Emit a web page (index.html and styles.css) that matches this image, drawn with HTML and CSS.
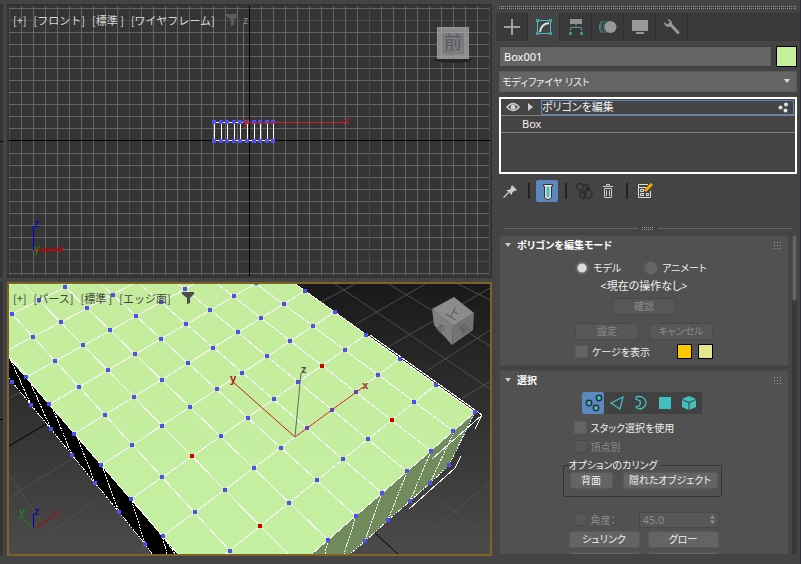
FILE: index.html
```html
<!DOCTYPE html>
<html lang="ja">
  <head>
    <title>Box001</title>
    <meta charset="utf-8">
    <link rel="stylesheet" href="styles.css">
  </head>
  <body>

  <main class="viewports">
    <div class="sliver"></div>
    <section class="viewport">
      <svg class="scene" viewBox="9 6 481 270" preserveAspectRatio="xMidYMid slice">
        <g id="frontGrid" shape-rendering="crispEdges"></g>
        <rect x="243" y="24" width="1" height="98" fill="#6b6b6b"/>
        <g id="frontBox" shape-rendering="crispEdges"></g>
        <rect x="243" y="122" width="102" height="1" fill="#d01e1e"/>
        <g class="axis">
          <text x="243" y="24" fill="#8c8c8c">z</text>
          <text x="243" y="125" fill="#c02020">y</text>
          <text x="343" y="124" fill="#c02020">x</text>
        </g>
        <rect x="33" y="226" width="1" height="24" fill="#0000c8"/>
        <rect x="34" y="249" width="28" height="2" fill="#c80000"/>
        <g class="axis">
          <text x="34" y="227" fill="#0000c8">z</text>
          <text x="34" y="252" fill="#149014">y</text>
          <text x="59" y="252" fill="#a01010">x</text>
        </g>
        <ellipse cx="453" cy="60" rx="19" ry="3" fill="#262626"/>
        <rect x="437.500" y="27.500" width="31" height="31" fill="#8a8a8a" stroke="#959595"/>
        <rect x="442" y="32" width="22" height="22" fill="#7c7c7c"/>
        <path d="M441.500 28V58M465.500 28V58M438 32.500H468M438 56.500H468" stroke="#999"/>
        <text class="cube-face" x="444" y="49" font-size="18">前</text>
      </svg>
      <div class="vp-label">
        <span>[+]</span><span>[フロント]</span><span>[標準 ]</span><span>[ワイヤフレーム]</span>
        <svg class="funnel" width="12" height="12" viewBox="0 0 12 12"><path d="M0 0H12V2L8 6V11L5 12V6L0 2Z"/></svg>
      </div>
    </section>

    <div class="sliver"></div>
    <section class="viewport active">
      <svg class="scene" viewBox="9 284 481 270" preserveAspectRatio="xMidYMid slice">
        <defs>
          <linearGradient id="sky" x1="0" y1="0" x2="0" y2="1">
            <stop offset="0" stop-color="#191919"/>
            <stop offset="1" stop-color="#4b4b4b"/>
          </linearGradient>
          <linearGradient id="top" x1="0" y1="0" x2="0" y2="1">
            <stop offset="0" stop-color="#c2ec9a"/>
            <stop offset="1" stop-color="#c6f0a2"/>
          </linearGradient>
        </defs>
        <rect x="9" y="284" width="481" height="270" fill="url(#sky)"/>
        <path d="M335 284L490 389M389 284L490 346M458 284L490 300M321 302L355 284M356 324L425 284M388 347L490 288M425 372L490 330M462 398L490 382" stroke="#4d4d4d" fill="none"/>
        <path d="M420 541L490 482M440 500L490 539M9 398L25 390M9 498L73 458M43 538L100 497M9 475L53 538" stroke="#505050" fill="none"/>
        <path d="M375 533L398 554M9 446L48 423" stroke="#000"/>
        <path d="M9 356L27 375L50 402L75 431L101 463L131 498L162 535L178 554H152L145 544L119 512L95 483L72 455L51 429L31 405L9 379Z" fill="#000"/>
        <path d="M475 412L313 554H350L365 541L388 520L410 501L430 483L449 465Z" fill="#708c5c"/>
        <g shape-rendering="crispEdges">
          <g id="mesh"></g>
          <g class="hidden-edges">
            <path d="M9 378L31 405L51 429L72 455L95 483L119 512L145 544L152 554"/>
            <path d="M9 356L31 405M9 356L27 375L51 429M50 402L72 455M75 431L95 483M101 463L119 512M131 498L145 544M131 498L167 542L175 554M162 535L167 554"/>
            <path d="M475 412L449 465L430 483L410 501L388 520L365 541L350 554"/>
            <path d="M454 432L430 483M431 451L410 501M407 472L388 520M382 493L365 541M356 516L344 554M328 540L325 554"/>
          </g>
          <path d="M370 335L482 415L475 429M482 415L432 459M461 456L455 468L409 509" stroke="#fff" fill="none"/>
        </g>
        <g id="meshPoints" shape-rendering="crispEdges"></g>
        <path d="M233 382L295 437L363 387" stroke="#c81e1e" fill="none"/>
        <path d="M295 437L301 373" stroke="#666"/>
        <g class="axis shaded">
          <text x="230" y="382" fill="#b02020">y</text>
          <text x="301" y="373" fill="#555">z</text>
          <text x="362" y="389" fill="#a04030">x</text>
        </g>
        <path d="M33.500 529V514" stroke="#0000b4"/>
        <path d="M34 529L22 517" stroke="#149014"/>
        <path d="M34 529L54 516" stroke="#c80000"/>
        <g class="axis">
          <text x="19" y="515" fill="#149014">y</text>
          <text x="34" y="515" fill="#0000b4">z</text>
          <text x="53" y="517" fill="#a01010">x</text>
        </g>
        <path d="M454 297L474 313L453 326L432 309Z" fill="#8c8c8c"/>
        <path d="M432 309L453 326L452 345L434 325Z" fill="#808080"/>
        <path d="M474 313L453 326L452 345L473 330Z" fill="#747474"/>
        <text class="cube-face" x="447" y="318" font-size="13" transform="rotate(30 454 312)">上</text>
        <text class="cube-face" x="437" y="332" font-size="9" transform="rotate(42 441 328)">左</text>
        <text class="cube-face" x="459" y="333" font-size="10" transform="rotate(-35 463 329)">前</text>
      </svg>
      <div class="vp-label">
        <span>[+]</span><span>[パース]</span><span>[標準 ]</span><span>[エッジ面]</span>
        <svg class="funnel" width="12" height="12" viewBox="0 0 12 12"><path d="M0 0H12V2L8 6V11L5 12V6L0 2Z"/></svg>
      </div>
    </section>
  </main>

  <aside class="panel">
    <div class="grip"></div>

    <nav class="tabs">
      <button class="tab" title="作成"><svg width="18" height="18" viewBox="0 0 18 18"><path d="M9 1V17M1 9H17" stroke="#a0a0a0" stroke-width="2"/></svg></button>
      <button class="tab on" title="修正"><svg width="18" height="18" viewBox="0 0 18 18" fill="none" stroke="#43bfc0"><path d="M4 2.500H14M4 15.500H14M2.500 4V14M15.500 4V14"/><path d="M1.500 1.500h2v2h-2zM14.500 1.500h2v2h-2zM1.500 14.500h2v2h-2zM14.500 14.500h2v2h-2z"/><path d="M5 14Q6 6 14 5" stroke="#ddd" stroke-width="2"/></svg></button>
      <button class="tab" title="階層"><svg width="18" height="18" viewBox="0 0 18 18"><path d="M3 1H15V6H3Z" fill="#929292"/><path d="M9 6V10M3.500 13V9.500H14.500V13" stroke="#459092" fill="none"/><path d="M2 14h3v3H2zM13 14h3v3h-3z" fill="#459092"/></svg></button>
      <button class="tab" title="モーション"><svg width="18" height="18" viewBox="0 0 18 18"><path d="M5 3A7 7 0 0 0 5 15M3 3A8 8 0 0 0 3 15M8 3A7 7 0 0 0 8 15" stroke="#459092" fill="none"/><circle cx="11.500" cy="9" r="6" fill="#989898"/></svg></button>
      <button class="tab" title="表示"><svg width="18" height="18" viewBox="0 0 18 18"><path d="M1 2H17V13H1ZM5 14H13V16H5Z" fill="#989898"/></svg></button>
      <button class="tab" title="ユーティリティ"><svg width="18" height="18" viewBox="0 0 18 18"><path d="M8 7L15 14.500" stroke="#989898" stroke-width="3" stroke-linecap="round"/><path d="M4 1L7 4L4.500 6.500L1 4Q1 8 5 9Q9 9 9 5Q8 1 4 1Z" fill="#989898"/></svg></button>
    </nav>

    <div class="name-row">
      <input class="name" type="text" value="Box001" aria-label="名前">
      <button class="swatch object-color" title="カラー"></button>
    </div>

    <div class="combo">
      <select aria-label="モディファイヤ リスト"><option>モディファイヤ リスト</option></select>
    </div>

    <ul class="stack">
      <li class="current">
        <svg width="14" height="10" viewBox="0 0 14 10"><path d="M1 5Q7-2 13 5Q7 12 1 5Z" fill="none" stroke="#d0d0d0" stroke-width="1.500"/><circle cx="7" cy="5" r="2.500" fill="#d0d0d0"/></svg>
        <svg width="7" height="8" viewBox="0 0 7 8"><path d="M1 0L6 4L1 8Z" fill="#d0d0d0"/></svg>
        <span class="modifier">ポリゴンを編集
          <svg width="11" height="11" viewBox="0 0 11 11" fill="#e0e0e0"><circle cx="2.500" cy="5.500" r="2"/><circle cx="8" cy="2.500" r="2"/><circle cx="7.500" cy="8.500" r="2"/></svg>
        </span>
      </li>
      <li class="base">Box</li>
    </ul>

    <div class="tools">
      <button class="tool" title="スタックを固定"><svg width="16" height="16" viewBox="0 0 16 16" fill="#ccc"><path d="M10 2L15 7L13 8L12 8L10 10L10 12L4 7L7 7L9 5L9 4ZM6 9L7 10L2 15L1 14.500Z"/></svg></button>
      <i class="sep"></i>
      <button class="tool on" title="最終結果を表示"><svg width="22" height="22" viewBox="0 0 22 22"><path d="M7.500 4.500H16.500V6.500H15.500V17Q15 19.500 12 19.500Q9 19.500 8.500 17V6.500H7.500Z" fill="#ddd" stroke="#333"/><path d="M10.500 7H13.500V17H10.500Z" fill="#43bfc0"/></svg></button>
      <i class="sep"></i>
      <button class="tool" title="固有にする"><svg width="18" height="18" viewBox="0 0 18 18" fill="none" stroke="#2b2b2b" stroke-width="1.300"><circle cx="5" cy="5" r="3.500"/><circle cx="8" cy="13" r="3"/><circle cx="13" cy="12" r="4"/><path d="M9 3H13V7M10 5L13 8L15 5"/></svg></button>
      <button class="tool" title="モディファイヤを削除"><svg width="16" height="16" viewBox="0 0 16 16" fill="none" stroke="#ccc"><path d="M3 3.500H13M6.500 3V1.500H9.500V3M4.500 5.500H11.500V14.500H4.500ZM6.500 7V13M9.500 7V13"/></svg></button>
      <i class="sep"></i>
      <button class="tool" title="モディファイヤ セットを設定"><svg width="16" height="16" viewBox="0 0 16 16" fill="none" stroke="#ddd"><path d="M11 1.500H1.500V14.500H13.500V8M2 4.500H9M3.500 6.500h3v2h-3zM3.500 10.500h3v2h-3zM9.500 10.500h2v2h-2z"/><path d="M8 8L15 1" stroke="#f5a700" stroke-width="3"/></svg></button>
    </div>

    <div class="splitter"><i class="dots"></i></div>

    <div class="rollouts">
      <div class="rollout-list">
        <section class="rollout">
          <h2>ポリゴンを編集モード<svg width="8" height="8"><use href="#gripDots"/></svg></h2>
          <div class="mode-body">
            <div class="radios">
              <label><input type="radio" name="mode" checked>モデル</label>
              <label><input type="radio" name="mode">アニメート</label>
            </div>
            <p>&lt;現在の操作なし&gt;</p>
            <button class="btn commit" disabled>確認</button>
            <div class="pair">
              <button class="btn" disabled>設定</button>
              <button class="btn" disabled>キャンセル</button>
            </div>
            <div class="cage">
              <label class="check"><input type="checkbox">ケージを表示</label>
              <button class="swatch cage-color" title="ケージ"></button>
              <button class="swatch cage-selected" title="選択ケージ"></button>
            </div>
          </div>
        </section>

        <section class="rollout selection">
          <h2>選択<svg width="8" height="8"><use href="#gripDots"/></svg></h2>
          <div class="select-body">
            <div class="levels">
              <button class="level on" title="頂点"><svg width="22" height="22" viewBox="0 0 22 22" fill="#43bfc0" stroke="#20363c" stroke-width="1.500"><circle cx="7" cy="11" r="2.700"/><circle cx="17" cy="6" r="2.700"/><circle cx="14" cy="16" r="2.700"/></svg></button>
              <button class="level" title="エッジ"><svg width="22" height="22" viewBox="0 0 22 22" fill="none" stroke="#43bfc0" stroke-width="1.300"><path d="M17 5L5 11L14 17Z"/></svg></button>
              <button class="level" title="境界"><svg width="22" height="22" viewBox="0 0 22 22" fill="none" stroke="#43bfc0" stroke-width="1.300"><path d="M6 5Q8 4 12 5Q16 7 16 11Q15 16 10 17Q7 17 6 15L9 14Q11 12 10 9L6 7Z"/></svg></button>
              <button class="level" title="ポリゴン"><svg width="22" height="22" viewBox="0 0 22 22"><path d="M5 5H17V17H5Z" fill="#43bfc0"/></svg></button>
              <button class="level" title="要素"><svg width="22" height="22" viewBox="0 0 22 22" fill="#43bfc0"><path d="M11 4L18 7L11 10L4 7ZM4 8L10.500 11V18L4 15ZM18 8L11.500 11V18L18 15Z"/></svg></button>
            </div>
            <label class="check"><input type="checkbox">スタック選択を使用</label>
            <label class="check off"><input type="checkbox" disabled>頂点別</label>
            <fieldset>
              <legend>オプションのカリング</legend>
              <button class="btn back">背面</button>
              <button class="btn occluded">隠れたオブジェクト</button>
            </fieldset>
            <div class="angle">
              <label class="check off"><input type="checkbox" disabled>角度：</label>
              <span class="spinner">
                <input type="text" value="45.0" disabled aria-label="角度">
                <svg width="5" height="9" viewBox="0 0 5 9" fill="#8c8c8c"><path d="M0 3.500L2.500 0L5 3.500ZM0 5.500L2.500 9L5 5.500Z"/></svg>
              </span>
            </div>
            <div class="pair wide">
              <button class="btn">シュリンク</button>
              <button class="btn">グロー</button>
            </div>
            <div class="pair wide">
              <button class="btn" title="リング"></button>
              <button class="btn" title="ループ"></button>
            </div>
          </div>
        </section>
      </div>
      <div class="scrollbar"><div class="thumb"></div></div>
    </div>
  </aside>

  <svg width="0" height="0" class="defs">
    <defs>
      <g id="gripDots" fill="#999"><path d="M0 1h1v1H0zM3 1h1v1H3zM6 1h1v1H6zM0 4h1v1H0zM3 4h1v1H3zM6 4h1v1H6zM0 7h1v1H0zM3 7h1v1H3zM6 7h1v1H6z"/></g>
    </defs>
  </svg>

  <script src="scene.js"></script>
  </body>
</html>
```

FILE: styles.css
```css
* {
  box-sizing: border-box;
}
html {
  height: 100%;
}
body {
  margin: 0;
  height: 100%;
  display: flex;
  overflow: hidden;
  background: #444;
  color: #f0f0f0;
  font-family: "Noto Sans", "Noto Sans CJK JP", sans-serif;
  font-size: 11px;
  line-height: 16px;
  font-feature-settings: "palt";
}
button, input, select {
  margin: 0;
  padding: 0;
  border: 0;
  color: inherit;
  font: inherit;
  font-feature-settings: inherit;
}
svg {
  display: block;
  flex: none;
}
.defs {
  position: absolute;
}

/* viewports */
.viewports {
  flex: 1;
  min-width: 0;
  display: grid;
  grid-template-columns: 3px 1fr;
  grid-template-rows: 1fr 1fr;
  gap: 4px;
  padding: 4px 4px 8px 0;
}
.sliver {
  background: linear-gradient(#000, #000) center / 100% 1px no-repeat #353535;
}
.viewport {
  position: relative;
  min-width: 0;
  min-height: 0;
  overflow: hidden;
  border: 2px solid #323232;
  background: #353535;
}
.viewport.active {
  border-color: #7b6426;
}
.scene {
  position: absolute;
  width: 100%;
  height: 100%;
}
.axis {
  font-size: 11px;
}
.axis.shaded {
  font-weight: bold;
}
.cube-face {
  fill: #565a62;
  font-family: "Noto Sans CJK JP", sans-serif;
}
.hidden-edges {
  fill: none;
  stroke: #fff;
  stroke-dasharray: 2 1;
}
.vp-label {
  position: absolute;
  top: 6px;
  left: 4px;
  display: flex;
  gap: 7px;
  color: #d8d8d8;
  font-family: "Noto Sans CJK JP", sans-serif;
  font-feature-settings: normal;
  white-space: pre;
}
.active .vp-label {
  color: #444;
}
.funnel {
  margin: 2px 0 0 4px;
  fill: #5c5c5c;
}
.active .funnel {
  fill: #4c4c4c;
}

/* command panel */
.panel {
  width: 305px;
  display: flex;
  flex-direction: column;
  padding: 6px 3px 10px;
  border-right: 1px solid #2b2d3c;
}
.grip, .dots {
  flex: none;
  height: 3px;
  background:
    linear-gradient(#444, #444) 0 1px / 100% 1px no-repeat,
    repeating-linear-gradient(90deg, #999 0 1px, #444 1px 2px);
}
.tabs {
  display: flex;
  height: 28px;
  margin: 4px -3px 5px;
  background: #393939;
}
.tab {
  display: grid;
  place-items: center;
  width: 32px;
  background: none;
  border-right: 1px solid #303030;
}
.tab.on {
  background: #444;
}
.name-row {
  display: flex;
  gap: 4px;
  height: 21px;
}
.name {
  flex: 1;
  min-width: 0;
  padding-left: 4px;
  background: #646464;
  border: 1px solid #3c3c3c;
  color: #fff;
}
.swatch {
  width: 15px;
  height: 15px;
  border: 1px solid #000;
}
.object-color {
  width: 21px;
  height: 21px;
  background: #c5f19b;
}
.cage-color {
  background: #ffc800;
}
.cage-selected {
  background: #e5e58c;
}
.combo {
  position: relative;
  margin-top: 4px;
  height: 21px;
}
.combo select {
  appearance: none;
  width: 100%;
  height: 100%;
  padding-left: 2px;
  background: #646464;
  border: 1px solid #5a5a5a;
  font-size: 10px;
}
.combo::after {
  content: "";
  position: absolute;
  right: 7px;
  top: 8px;
  border: 3px solid transparent;
  border-top: 4px solid #ddd;
  border-bottom: 0;
}
.stack {
  flex: none;
  height: 77px;
  margin: 5px 0 6px;
  padding: 0;
  list-style: none;
  border: 2px solid #fff;
}
.stack li {
  display: flex;
  align-items: center;
  height: 17px;
  border-bottom: 1px solid #808080;
}
.current {
  gap: 7px;
  padding-left: 5px;
}
.modifier {
  flex: 1;
  display: flex;
  align-items: center;
  justify-content: space-between;
  height: 15px;
  margin-right: 1px;
  padding-right: 4px;
  border: 1px solid #5c87bf;
}
.stack .base {
  padding-left: 21px;
}
.tools {
  display: flex;
  align-items: center;
  height: 22px;
  gap: 2px;
}
.tool, .level {
  display: grid;
  place-items: center;
  width: 22px;
  height: 22px;
  background: none;
  border-radius: 2px;
}
.tool.on, .level.on {
  background: #5c87bf;
}
.sep {
  width: 2px;
  height: 16px;
  margin: 0 4px 0 5px;
  background: #222;
}
.splitter {
  display: flex;
  align-items: center;
  gap: 4px;
  height: 6px;
  margin: 23px 5px 4px;
}
.splitter::before, .splitter::after {
  content: "";
  flex: 1;
  height: 1px;
  background: #666;
}
.dots {
  width: 12px;
}

/* rollouts */
.rollouts {
  flex: 1;
  min-height: 0;
  display: flex;
  gap: 3px;
  font-size: 10px;
}
.rollout-list {
  flex: 1;
  overflow: hidden;
}
.rollout {
  height: 131px;
  margin-bottom: 4px;
  padding: 2px;
  background: #515151;
  border: 1px solid #484848;
  border-radius: 2px;
}
.rollout.selection {
  height: 240px;
}
.rollout h2 {
  display: flex;
  align-items: center;
  margin: 0;
  padding: 0 4px 0 3px;
  font-size: 10px;
  line-height: 14px;
  color: #fff;
}
.rollout h2::before {
  content: "";
  margin-right: 6px;
  border: 3px solid transparent;
  border-top: 4px solid #ccc;
  border-bottom: 0;
}
.rollout h2 svg {
  margin-left: auto;
}
.mode-body {
  width: 138px;
  margin: 8px auto 0;
}
.mode-body p {
  margin: 2px 0 4px;
  font-size: 11px;
  text-align: center;
}
.radios {
  display: flex;
}
.radios label {
  display: flex;
  align-items: center;
  gap: 4px;
  width: 69px;
  white-space: nowrap;
}
input[type="radio"] {
  appearance: none;
  width: 14px;
  height: 14px;
  border-radius: 50%;
  background: #646464;
  border: 1px solid #5c5c5c;
}
input[type="radio"]:checked {
  background: radial-gradient(circle, #ddd 0 4px, #6c6c6c 5px);
}
.btn {
  height: 17px;
  line-height: 15px;
  background: #646464;
  border: 1px solid #585858;
  border-radius: 2px;
  white-space: nowrap;
}
.btn:disabled {
  background: #575757;
  border-color: #494949;
  color: #8c8c8c;
}
.commit {
  display: block;
  width: 64px;
  margin: 0 auto 8px;
}
.pair {
  display: flex;
  justify-content: space-between;
}
.pair .btn {
  width: 64px;
}
.check {
  display: flex;
  align-items: center;
  gap: 4px;
  height: 19px;
  white-space: nowrap;
}
.check.off {
  color: #8c8c8c;
}
input[type="checkbox"] {
  appearance: none;
  width: 13px;
  height: 13px;
  background: #646464;
  border: 1px solid #5a5a5a;
}
input[type="checkbox"]:disabled {
  background: #575757;
  border-color: #4a4a4a;
}
.cage {
  display: flex;
  align-items: center;
  gap: 6px;
  margin-top: 2px;
}
.cage .check {
  flex: 1;
}
.select-body {
  width: 163px;
  margin: 5px auto 0;
  padding-right: 4px;
}
.levels {
  display: flex;
  gap: 2px;
  width: 120px;
  margin: 0 auto 4px;
  background: #414141;
}
.select-body .check {
  padding-left: 11px;
}
fieldset {
  display: flex;
  justify-content: space-between;
  margin: 2px 0 13px;
  padding: 0 3px 4px 6px;
  border: 1px solid #333;
  border-radius: 2px;
  height: 39px;
}
legend {
  padding: 0 3px 0 0;
  margin-left: -1px;
  line-height: 14px;
}
.back {
  width: 43px;
}
.occluded {
  width: 95px;
}
.angle {
  display: flex;
  align-items: center;
  justify-content: space-between;
  margin-bottom: 2px;
}
.spinner {
  display: flex;
  align-items: center;
  width: 80px;
  height: 16px;
  margin-right: 3px;
  padding: 0 3px;
  background: #575757;
  border: 1px solid #484848;
}
.spinner input {
  flex: 1;
  min-width: 0;
  background: none;
  color: #8c8c8c;
  font-size: 11px;
}
.pair.wide {
  margin-bottom: 4px;
  padding: 0 3px 0 6px;
}
.wide .btn {
  width: 71px;
}
.scrollbar {
  width: 5px;
  background: #393939;
  border-radius: 2px;
}
.thumb {
  height: 66px;
  background: #646464;
  border: 1px solid #4c4c4c;
  border-radius: 2px;
}
```

FILE: scene.js
```javascript
var NS = 'http://www.w3.org/2000/svg';

function add(parent, tag, attrs) {
  var el = document.createElementNS(NS, tag);
  for (var k in attrs) el.setAttribute(k, attrs[k]);
  document.getElementById(parent).appendChild(el);
}

function point(parent, p, color) {
  add(parent, 'rect', {x: Math.round(p[0]) - 2, y: Math.round(p[1]) - 2, width: 4, height: 4, fill: color || '#5050f0'});
}

// front view: home grid, every tenth line is darker
for (var i = -20; i <= 20; i++) {
  var color = i % 10 === 0 ? '#4a4a4a' : '#656565';
  if (i === 0) continue;
  add('frontGrid', 'rect', {x: 249 + i * 12, y: 6, width: 1, height: 270, fill: color});
  add('frontGrid', 'rect', {x: 9, y: 140 + i * 12 + (i > 0 ? 1 : 0), width: 481, height: 1, fill: color});
}
add('frontGrid', 'path', {d: 'M249.5 6V276M9 140.5H490', stroke: '#000'});

// front view: box with nine segments
add('frontBox', 'path', {d: 'M214 122.5H273M214 140.5H273', stroke: '#fff'});
for (i = 0; i < 10; i++) {
  var x = Math.round(214 + i * 6.6);
  add('frontBox', 'path', {d: 'M' + (x + 0.5) + ' 122V140', stroke: '#fff'});
  point('frontBox', [x, 122]);
  point('frontBox', [x, 141]);
}

// perspective view: i runs along the back edge, j along the front edge
function project(i, j) {
  var d = 1 + 0.037 * i - 0.0232 * j;
  return [(475 - 22.7 * i - 32.1 * j) / d, (412.3 - 13.54 * i + 8.75 * j) / d];
}

var ROWS = 16, COLS = 9, selected = ['1,2', '1,7', '3,7', '3,2'];
var corners = [project(0, 0), project(ROWS, 0), [-80, 200], project(ROWS, COLS), project(0, COLS)];
add('mesh', 'path', {d: 'M' + corners.join('L') + 'Z', fill: 'url(#top)'});
for (i = 0; i <= ROWS; i++) {
  add('mesh', 'path', {d: 'M' + project(i, 0) + 'L' + project(i, COLS), stroke: '#fff'});
}
for (var j = 0; j <= COLS; j++) {
  add('mesh', 'path', {d: 'M' + project(0, j) + 'L' + project(ROWS, j), stroke: '#fff'});
}
[[12, 382], [31, 405], [51, 429], [72, 455], [95, 483], [119, 512], [145, 544],
 [449, 465], [430, 483], [410, 501], [388, 520], [365, 541]].forEach(function(p) {
  point('meshPoints', p);
});
for (i = 0; i <= ROWS; i++) {
  for (j = 0; j <= COLS; j++) {
    point('meshPoints', project(i, j), selected.indexOf(i + ',' + j) >= 0 ? '#d00000' : '');
  }
}
```
